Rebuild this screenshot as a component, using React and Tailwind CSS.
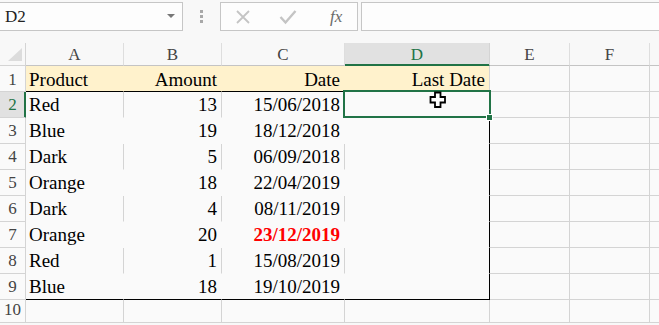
const COLS = [
  { id: "A", w: "w-[98px]", align: "justify-start pl-[3px]" },
  { id: "B", w: "w-[98px]", align: "justify-end pr-[4px]" },
  { id: "C", w: "w-[123px]", align: "justify-end pr-[4px]" },
  { id: "D", w: "w-[145px]", align: "justify-end pr-[4px]" },
  { id: "E", w: "w-[80px]", align: "justify-end pr-[4px]" },
  { id: "F", w: "w-[80px]", align: "justify-end pr-[4px]" },
  { id: "G", w: "w-[80px]", align: "justify-end pr-[4px]" },
];

const ROWS = [
  ["Product", "Amount", "Date", "Last Date"],
  ["Red", "13", "15/06/2018", ""],
  ["Blue", "19", "18/12/2018", ""],
  ["Dark", "5", "06/09/2018", ""],
  ["Orange", "18", "22/04/2019", ""],
  ["Dark", "4", "08/11/2019", ""],
  ["Orange", "20", "23/12/2019", ""],
  ["Red", "1", "15/08/2019", ""],
  ["Blue", "18", "19/10/2019", ""],
  ["", "", "", ""],
];

// border colours for each cell, mimicking the table's borders / hidden gridlines
function cellBorders(r, c) {
  const inTable = c < 4;
  let right = "border-r-[#d4d4d4]";
  let bottom = "border-b-[#d4d4d4]";
  if (inTable && r === 1) {
    right = c === 3 ? "border-r-[#d4d4d4]" : "border-r-[#fff2cc]";
    bottom = "border-b-black";
  } else if (inTable && r >= 2 && r <= 9) {
    if (c === 3) right = "border-r-black";
    else right = r % 2 === 0 ? "border-r-[#d4d4d4]" : "border-r-transparent";
    bottom = r === 9 ? "border-b-black" : "border-b-transparent";
  }
  return `${right} ${bottom}`;
}

function FormulaBar() {
  return (
    <div className="flex h-[43px] items-start pt-[2px]">
      <div className="flex h-[29px] w-[183px] shrink-0 items-center justify-between border border-l-0 border-[#c6c6c6] bg-[#fdfdfd] pl-[5px] pr-[7px]">
        <span className="text-[17px] leading-none text-[#222]">D2</span>
        <svg width="8" height="5" viewBox="0 0 8 5">
          <path d="M0 0 L8 0 L4 4 Z" fill="#777" />
        </svg>
      </div>
      <div className="flex w-[37px] shrink-0 flex-col items-center gap-[2px] pt-[8px]">
        <div className="h-[3px] w-[3px] bg-[#a8a8a8]" />
        <div className="h-[3px] w-[3px] bg-[#a8a8a8]" />
        <div className="h-[3px] w-[3px] bg-[#a8a8a8]" />
      </div>
      <div className="flex h-[29px] w-[138px] shrink-0 items-center border border-[#c6c6c6] bg-[#fdfdfd]">
        <svg className="ml-[14px]" width="16" height="16" viewBox="0 0 16 16">
          <path d="M2 2 L14 14 M14 2 L2 14" stroke="#c4c4c4" strokeWidth="1.8" />
        </svg>
        <svg className="ml-[28px]" width="18" height="16" viewBox="0 0 18 16">
          <path d="M1.5 8 L6.5 13.5 L16.5 2" stroke="#c4c4c4" strokeWidth="2.4" fill="none" />
        </svg>
        <span className="ml-[33px] text-[17px] italic leading-none text-[#6a6a6a]">fx</span>
      </div>
      <div className="ml-[3px] h-[29px] flex-1 border border-r-0 border-[#c6c6c6] bg-[#fdfdfd]" />
    </div>
  );
}

function HeaderRow() {
  return (
    <div className="flex h-[23px]">
      <div className="relative h-full w-[26px] shrink-0 border-r border-b border-[#d4d4d4]">
        <svg className="absolute left-0 top-0" width="25" height="22" viewBox="0 0 25 22">
          <path d="M22 5 L22 18 L8 18 Z" fill="#dcdcdc" />
        </svg>
      </div>
      {COLS.map((col) => (
        <div
          key={col.id}
          className={`flex h-full shrink-0 items-end justify-center border-r border-b ${col.w} ${
            col.id === "D"
              ? "border-r-[#d4d4d4] border-b-[#217346] bg-[#e1e1e1] text-[#217346] shadow-[inset_0_-1px_0_#217346]"
              : "border-r-[#dedede] border-b-[#c4c4c4] text-[#444]"
          }`}
        >
          {/* G is off-screen, only its edge shows */}
          <span className="text-[17px] leading-[21px]">{col.id === "G" ? "" : col.id}</span>
        </div>
      ))}
    </div>
  );
}

function SheetRow({ cells, r }) {
  const isActive = r === 2;
  return (
    <div className={`flex ${r === 10 ? "h-[23px]" : "h-[26px]"}`}>
      <div
        className={`flex h-full w-[26px] shrink-0 items-end justify-center border-r border-b border-b-[#d4d4d4] ${
          r === 1 ? "pb-[1px]" : "pb-[2px]"
        } ${
          isActive
            ? "border-r-[#217346] bg-[#e1e1e1] text-[#217346] shadow-[inset_-1px_0_0_#217346]"
            : "border-r-[#d4d4d4] text-[#444]"
        }`}
      >
        <span className="text-[17px] leading-[21px]">{r}</span>
      </div>
      {COLS.map((col, c) => {
        const text = cells[c] || "";
        const red = r === 7 && c === 2;
        return (
          <div
            key={col.id}
            className={`flex h-full shrink-0 items-end border-r border-b ${col.w} ${col.align} ${cellBorders(r, c)} ${
              r === 1 && c < 4 ? "bg-[#fff2cc] pb-[1px]" : "pb-[2px]"
            }`}
          >
            <span
              className={`whitespace-nowrap text-[19px] leading-[21px] ${
                red ? "font-bold text-[#ff0000]" : "text-black"
              }`}
            >
              {text}
            </span>
          </div>
        );
      })}
    </div>
  );
}

export default function App() {
  return (
    <div className="relative h-[325px] w-[659px] overflow-hidden bg-[#f8f8f8] [font-family:'Liberation_Serif','Times_New_Roman',serif]">
      <FormulaBar />
      <HeaderRow />
      <div className="bg-[#fafafa]">
        {ROWS.map((cells, i) => (
          <SheetRow key={i} cells={cells} r={i + 1} />
        ))}
      </div>

      {/* active cell selection */}
      <div className="absolute left-[343px] top-[90px] h-[28px] w-[148px] border-2 border-[#217346]" />
      <div className="absolute left-[486px] top-[114px] h-[7px] w-[7px] border border-white bg-[#217346]" />

      {/* fat cross cursor */}
      <svg className="absolute left-[429px] top-[91px]" width="18" height="18" viewBox="0 0 18 18">
        <path
          d="M6 1.5 H11.5 V6 H16 V11.5 H11.5 V16 H6 V11.5 H1.5 V6 H6 Z"
          fill="white"
          stroke="black"
          strokeWidth="1.8"
          strokeLinejoin="miter"
        />
      </svg>
    </div>
  );
}
